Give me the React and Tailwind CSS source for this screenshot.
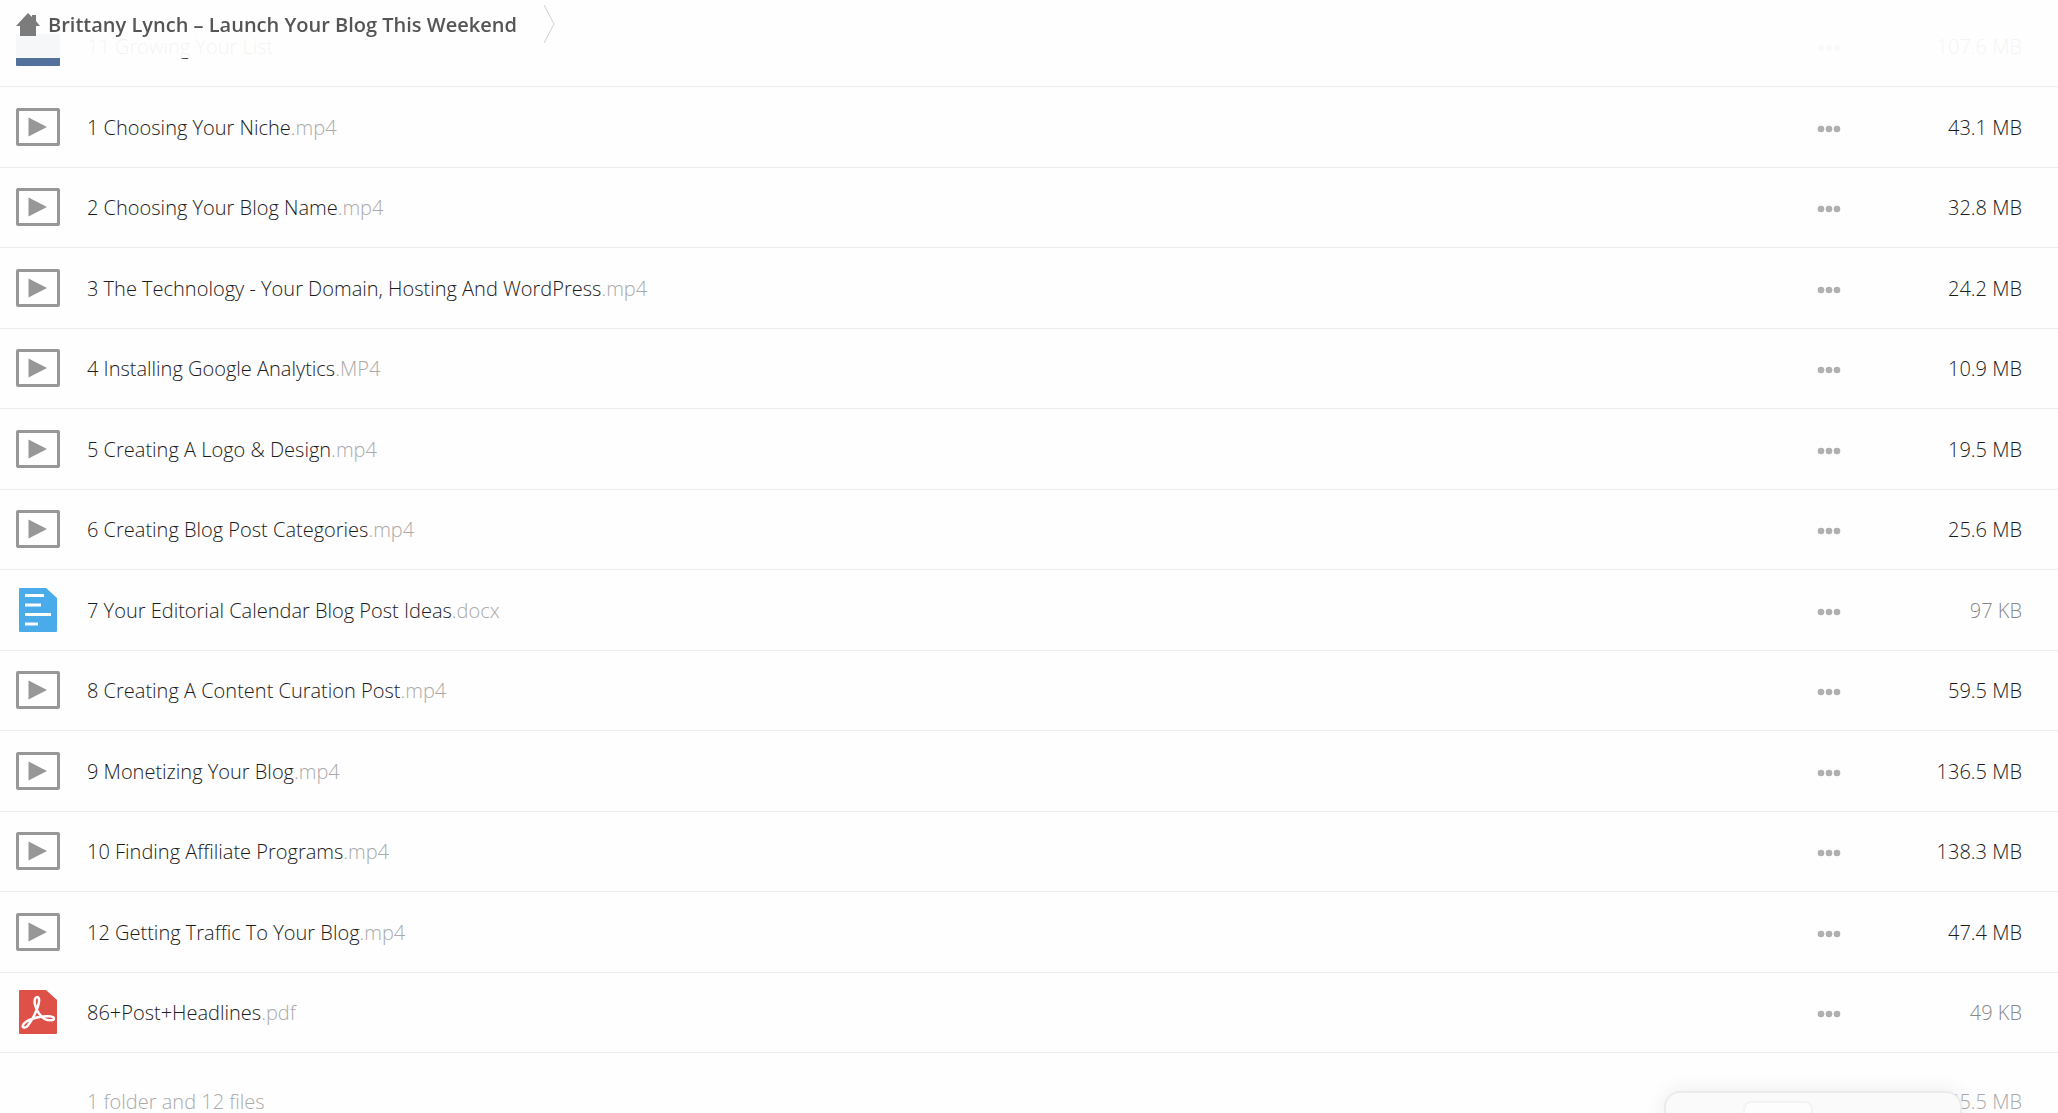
import { useState } from 'react'

const FILES = [
  { name: '11 Growing Your List', ext: '', size: '107.6 MB', type: 'folder' },
  { name: '1 Choosing Your Niche', ext: '.mp4', size: '43.1 MB', type: 'video' },
  { name: '2 Choosing Your Blog Name', ext: '.mp4', size: '32.8 MB', type: 'video' },
  { name: '3 The Technology - Your Domain, Hosting And WordPress', ext: '.mp4', size: '24.2 MB', type: 'video' },
  { name: '4 Installing Google Analytics', ext: '.MP4', size: '10.9 MB', type: 'video' },
  { name: '5 Creating A Logo & Design', ext: '.mp4', size: '19.5 MB', type: 'video' },
  { name: '6 Creating Blog Post Categories', ext: '.mp4', size: '25.6 MB', type: 'video' },
  { name: '7 Your Editorial Calendar Blog Post Ideas', ext: '.docx', size: '97 KB', type: 'doc' },
  { name: '8 Creating A Content Curation Post', ext: '.mp4', size: '59.5 MB', type: 'video' },
  { name: '9 Monetizing Your Blog', ext: '.mp4', size: '136.5 MB', type: 'video' },
  { name: '10 Finding Affiliate Programs', ext: '.mp4', size: '138.3 MB', type: 'video' },
  { name: '12 Getting Traffic To Your Blog', ext: '.mp4', size: '47.4 MB', type: 'video' },
  { name: '86+Post+Headlines', ext: '.pdf', size: '49 KB', type: 'pdf' },
]

function FileIcon({ type }) {
  if (type === 'folder') {
    return (
      <svg className="h-11 w-11" viewBox="0 0 44 44" aria-hidden="true">
        <path d="M0 10h44v31q0 1-1 1H1q-1 0-1-1z" fill="#54719d" />
      </svg>
    )
  }
  if (type === 'doc') {
    return (
      <svg className="h-11 w-11" viewBox="0 0 44 44" aria-hidden="true">
        <path d="M4 0h26l11 10v33q0 1-1 1H4q-1 0-1-1V1q0-1 1-1z" fill="#4aabea" />
        <path d="M9 7.5h19M9 17h16M9 26.5h26M9 36h13" stroke="#fff" strokeWidth="3" />
      </svg>
    )
  }
  if (type === 'pdf') {
    return (
      <svg className="h-11 w-11" viewBox="0 0 44 44" aria-hidden="true">
        <path d="M4 0h26l11 10v33q0 1-1 1H4q-1 0-1-1V1q0-1 1-1z" fill="#dd5148" />
        <path
          d="M20 7.5c2-1.500 3.500.5 3 4-.7 6-6 18-11.500 24.500-2 2.500-6 2-4.500-1 2-4 10.500-7.500 19.500-8.500 6.500-.7 11.500-.3 11.500 2s-5 2.300-8.500.8c-5-2.300-9.500-9.300-10.500-14.800-.5-2.500-.5-6 1-7z"
          fill="none"
          stroke="#fff"
          strokeWidth="2.5"
          strokeLinejoin="round"
        />
      </svg>
    )
  }
  return (
    <svg className="h-11 w-11" viewBox="0 0 44 44" aria-hidden="true">
      <rect x="1.5" y="4.5" width="41" height="35" rx="0.5" fill="none" stroke="#979797" strokeWidth="3" />
      <path d="M12.5 12.5v19l18.5-9.5z" fill="#979797" />
    </svg>
  )
}

function FileRow({ file }) {
  const small = file.size.endsWith('KB')
  return (
    <tr className="h-20 border-b border-[#ebebeb] even:h-[81px]">
      <td className="w-[87px] pl-4">
        <FileIcon type={file.type} />
      </td>
      <td className="pt-[2px]">
        <a href="#file" className="text-[#1c1c1c]">
          {file.name}
          <span className="text-[#aaa]">{file.ext}</span>
        </a>
      </td>
      <td className="w-[60px]">
        <button type="button" aria-label={`Options for ${file.name}`} className="mt-1 block">
          <svg className="h-2 w-6" viewBox="0 0 24 8" fill="#b0b0b0" aria-hidden="true">
            <circle cx="4" cy="4" r="3.3" />
            <circle cx="12" cy="4" r="3.3" />
            <circle cx="20" cy="4" r="3.3" />
          </svg>
        </button>
      </td>
      <td className={`w-[181px] pt-[2px] pr-9 text-right ${small ? 'text-[#888]' : 'text-[#1c1c1c]'}`}>{file.size}</td>
    </tr>
  )
}

export default function App() {
  const [files] = useState(FILES)

  return (
    <div className="h-screen overflow-hidden bg-[#fefefe] font-['Open_Sans',sans-serif] text-xl font-light">
      <header className="fixed inset-x-0 top-0 z-10 flex h-[58px] items-start bg-[#fefefe]/95">
        <nav aria-label="Breadcrumb" className="flex items-center pt-1 pl-4">
          <a href="#home" className="flex items-center gap-2 pt-px font-semibold text-[#555]">
            {/* home */}
            <svg className="h-6 w-6" viewBox="0 0 24 24" fill="#7c7c7c" aria-hidden="true">
              <path d="M12 0l4 4V2h4v6l4 5h-4v10H4V13H0z" />
            </svg>
            Brittany Lynch – Launch Your Blog This Weekend
          </a>
          <svg className="ml-[26px] h-10 w-3" viewBox="0 0 12 40" fill="none" stroke="#d0d0d0" aria-hidden="true">
            <path d="M1 1l10 19L1 39" />
          </svg>
        </nav>
      </header>

      <main className="pt-[6px]">
        <table className="w-full border-collapse">
          <tbody>
            {files.map((file) => (
              <FileRow key={file.name} file={file} />
            ))}
          </tbody>
        </table>
        <footer className="flex justify-between pt-[35px] pr-9 pl-[87px] text-[#aaa]">
          <span>1 folder and 12 files</span>
          <span>645.5 MB</span>
        </footer>
      </main>

      {/* Bottom toolbar, mostly tucked below the window */}
      <div className="fixed right-24 -bottom-4 z-20 flex h-[38px] w-[298px] rounded-2xl border-2 border-[#ebebeb] bg-[#fafafa] pt-2 pl-[77px] shadow-[0_0_20px_rgba(0,0,0,0.08)]">
        <div className="h-10 w-[70px] rounded-lg border-2 border-[#f3f3f3] bg-[#fdfdfd]" />
      </div>
    </div>
  )
}
